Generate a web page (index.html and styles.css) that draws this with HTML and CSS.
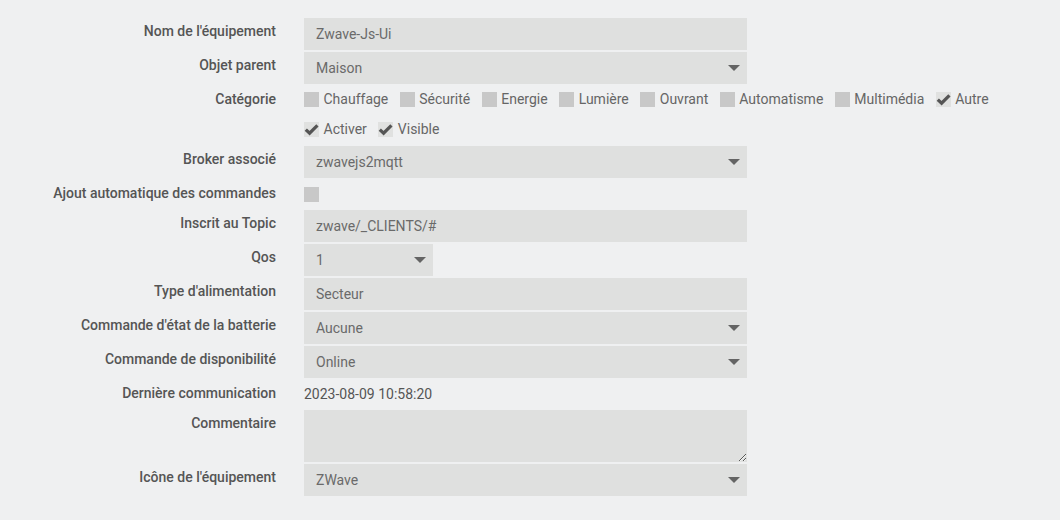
FILE: index.html
```html
<!DOCTYPE html>
<html lang="fr">
<head>
<meta charset="utf-8">
<link rel="stylesheet" href="styles.css">
</head>
<body>
<form class="form">
  <div class="row">
    <label class="lbl">Nom de l'équipement</label>
    <div class="ctl"><div class="input">Zwave-Js-Ui</div></div>
  </div>
  <div class="row">
    <label class="lbl">Objet parent</label>
    <div class="ctl"><div class="input select">Maison<span class="caret"></span></div></div>
  </div>
  <div class="row">
    <label class="lbl">Catégorie</label>
    <div class="ctl checks">
      <div class="line">
        <span class="cb"></span><span class="cbt">Chauffage</span>
        <span class="cb"></span><span class="cbt">Sécurité</span>
        <span class="cb"></span><span class="cbt">Energie</span>
        <span class="cb"></span><span class="cbt">Lumière</span>
        <span class="cb"></span><span class="cbt">Ouvrant</span>
        <span class="cb"></span><span class="cbt">Automatisme</span>
        <span class="cb"></span><span class="cbt">Multimédia</span>
        <span class="cb on"><svg viewBox="0 0 15 15"><path d="M1.8 7.6 L5.6 11.2 L13.4 3.4"/></svg></span><span class="cbt">Autre</span>
      </div>
      <div class="line">
        <span class="cb on"><svg viewBox="0 0 15 15"><path d="M1.8 7.6 L5.6 11.2 L13.4 3.4"/></svg></span><span class="cbt">Activer</span>
        <span class="cb on"><svg viewBox="0 0 15 15"><path d="M1.8 7.6 L5.6 11.2 L13.4 3.4"/></svg></span><span class="cbt">Visible</span>
      </div>
    </div>
  </div>
  <div class="row">
    <label class="lbl">Broker associé</label>
    <div class="ctl"><div class="input select">zwavejs2mqtt<span class="caret"></span></div></div>
  </div>
  <div class="row short">
    <label class="lbl">Ajout automatique des commandes</label>
    <div class="ctl single"><span class="cb"></span></div>
  </div>
  <div class="row">
    <label class="lbl">Inscrit au Topic</label>
    <div class="ctl"><div class="input">zwave/_CLIENTS/#</div></div>
  </div>
  <div class="row">
    <label class="lbl">Qos</label>
    <div class="ctl"><div class="input select qos">1<span class="caret"></span></div></div>
  </div>
  <div class="row">
    <label class="lbl">Type d'alimentation</label>
    <div class="ctl"><div class="input">Secteur</div></div>
  </div>
  <div class="row">
    <label class="lbl">Commande d'état de la batterie</label>
    <div class="ctl"><div class="input select">Aucune<span class="caret"></span></div></div>
  </div>
  <div class="row">
    <label class="lbl">Commande de disponibilité</label>
    <div class="ctl"><div class="input select">Online<span class="caret"></span></div></div>
  </div>
  <div class="row short">
    <label class="lbl">Dernière communication</label>
    <div class="ctl single"><span class="value">2023-08-09 10:58:20</span></div>
  </div>
  <div class="row">
    <label class="lbl">Commentaire</label>
    <div class="ctl"><textarea class="area"></textarea></div>
  </div>
  <div class="row">
    <label class="lbl">Icône de l'équipement</label>
    <div class="ctl"><div class="input select">ZWave<span class="caret"></span></div></div>
  </div>
</form>
</body>
</html>
```

FILE: styles.css
```css
html, body {
  margin: 0;
  padding: 0;
  background: #eff0f1;
  font-family: Roboto, "Liberation Sans", sans-serif;
}

.form {
  padding-top: 18px;
  width: 747px;
}

.row {
  display: grid;
  grid-template-columns: 276px 443px;
  column-gap: 28px;
  margin-bottom: 2px;
}

.lbl {
  text-align: right;
  font-size: 14px;
  font-weight: 500;
  color: #555;
  line-height: 26px;
  white-space: nowrap;
}

.input {
  position: relative;
  height: 32px;
  box-sizing: border-box;
  background: #dfe0df;
  color: #6a6a6a;
  font-size: 14px;
  line-height: 32px;
  padding: 0 12px;
}

.qos {
  width: 129px;
}

.caret {
  position: absolute;
  right: 7px;
  top: 13px;
  width: 0;
  height: 0;
  border-left: 6px solid transparent;
  border-right: 6px solid transparent;
  border-top: 6px solid #646464;
}

.checks {
  padding-bottom: 2px;
}
.checks .line {
  display: flex;
  align-items: center;
  height: 26px;
}
.checks .line + .line {
  margin-top: 4px;
}

.cb {
  display: inline-block;
  width: 15px;
  height: 15px;
  background: #c8c8c8;
  flex: none;
}
.cb.on {
  background: #e0e1e0;
}
.cb svg {
  display: block;
  width: 15px;
  height: 15px;
}
.cb svg path {
  fill: none;
  stroke: #555;
  stroke-width: 3.2;
  stroke-linecap: butt;
  stroke-linejoin: miter;
}

.cbt {
  font-size: 14px;
  color: #666;
  margin-left: 4.5px;
  margin-right: 11.5px;
}

.single {
  display: flex;
  align-items: center;
  height: 28px;
}

.value {
  font-size: 14px;
  color: #555;
}

.area {
  display: block;
  width: 443px;
  height: 52px;
  box-sizing: border-box;
  margin: 0;
  border: none;
  background: #dfe0df;
  resize: vertical;
  font-family: Roboto, "Liberation Sans", sans-serif;
  font-size: 14px;
}
```
